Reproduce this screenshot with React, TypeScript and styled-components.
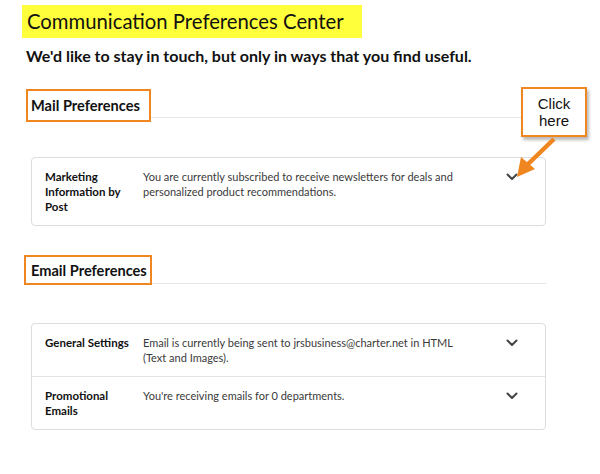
import React from 'react'
import styled, { createGlobalStyle } from 'styled-components'

const GlobalStyle = createGlobalStyle`
	html, body {
		margin: 0;
		padding: 0;
		background: #ffffff;
	}
	body {
		font-family: Lato, 'Liberation Sans', Arial, sans-serif;
		color: #111111;
	}
`

const Page = styled.div`
	position: relative;
	width: 600px;
	height: 474px;
	padding: 5px 0 0 22px;
	box-sizing: border-box;
	overflow: hidden;
`

const Title = styled.h1`
	display: inline-block;
	margin: 0;
	padding: 3px 18px 3px 5px;
	background: #ffff3c;
	font-size: 20.3px;
	line-height: 27px;
	font-weight: 400;
	color: #111111;
`

const Subtitle = styled.p`
	margin: 8px 0 0 4px;
	font-size: 16px;
	line-height: 20px;
	font-weight: 700;
	color: #111111;
`

const Section = styled.section<{ $top: number }>`
	margin-top: ${(p) => p.$top}px;
	width: 524px;
`

const SectionHeader = styled.div<{ $offset: number }>`
	display: flex;
	align-items: flex-end;
	padding-left: ${(p) => p.$offset}px;
`

const HeadingBox = styled.h2<{ $height: number; $padL: number; $padR: number }>`
	margin: 0;
	box-sizing: border-box;
	height: ${(p) => p.$height}px;
	padding: 0 ${(p) => p.$padR}px 0 ${(p) => p.$padL}px;
	display: flex;
	align-items: center;
	border: 2px solid #f0861f;
	font-size: 14.6px;
	font-weight: 700;
	color: #111111;
	white-space: nowrap;
`

const Rule = styled.div<{ $lift: number }>`
	flex: 1;
	height: 1px;
	background: #e7e7e7;
	margin-bottom: ${(p) => p.$lift}px;
`

const Card = styled.div<{ $top: number }>`
	margin: ${(p) => p.$top}px 0 0 9px;
	border: 1px solid #dddddd;
	border-radius: 4px;
	background: #ffffff;
`

const Row = styled.div<{ $divided?: boolean }>`
	display: flex;
	align-items: flex-start;
	padding: 11px 0 11px 13px;
	border-top: ${(p) => (p.$divided ? '1px solid #e3e3e3' : 'none')};
`

const Label = styled.div`
	width: 86px;
	flex-shrink: 0;
	margin-right: 12px;
	font-size: 11.5px;
	line-height: 15px;
	font-weight: 700;
	color: #111111;
`

const Description = styled.div`
	width: 322px;
	flex-shrink: 0;
	font-size: 11px;
	line-height: 15px;
	color: #3a3a3a;
`

const Toggle = styled.div`
	margin-left: auto;
	width: 67px;
	height: 15px;
	display: flex;
	align-items: center;
	justify-content: center;
`

const Callout = styled.div`
	position: absolute;
	left: 521px;
	top: 87px;
	width: 66px;
	height: 50px;
	box-sizing: border-box;
	border: 2px solid #f0861f;
	background: #ffffff;
	box-shadow: 2px 3px 3px rgba(0, 0, 0, 0.28);
	display: flex;
	align-items: center;
	justify-content: center;
	text-align: center;
	font-family: 'Liberation Sans', Arial, sans-serif;
	font-size: 15px;
	line-height: 17px;
	color: #111111;
`

const Arrow = styled.svg`
	position: absolute;
	left: 510px;
	top: 136px;
`

const Chevron = () => (
	<svg width="12" height="8" viewBox="0 0 12 8">
		<polyline points="1.5,1.5 6,6 10.5,1.5" fill="none" stroke="#444444" strokeWidth="2" strokeLinecap="round" strokeLinejoin="round" />
	</svg>
)

const prefRow = (label: string, text: string, divided = false) => (
	<Row $divided={divided}>
		<Label>{label}</Label>
		<Description>{text}</Description>
		<Toggle>
			<Chevron />
		</Toggle>
	</Row>
)

export default function App() {
	return (
		<>
			<GlobalStyle />
			<Page>
				<Title>Communication Preferences Center</Title>
				<Subtitle>We'd like to stay in touch, but only in ways that you find useful.</Subtitle>

				<Section $top={23}>
					<SectionHeader $offset={4}>
						<HeadingBox $height={33} $padL={3} $padR={9}>Mail Preferences</HeadingBox>
						<Rule $lift={4} />
					</SectionHeader>
					<Card $top={35}>
						{prefRow(
							'Marketing Information by Post',
							'You are currently subscribed to receive newsletters for deals and personalized product recommendations.'
						)}
					</Card>
				</Section>

				<Section $top={29}>
					<SectionHeader $offset={2}>
						<HeadingBox $height={30} $padL={5} $padR={3}>Email Preferences</HeadingBox>
						<Rule $lift={1} />
					</SectionHeader>
					<Card $top={38}>
						{prefRow(
							'General Settings',
							'Email is currently being sent to jrsbusiness@charter.net in HTML (Text and Images).'
						)}
						{prefRow('Promotional Emails', "You're receiving emails for 0 departments.", true)}
					</Card>
				</Section>

				<Callout>
					Click
					<br />
					here
				</Callout>
				<Arrow width="50" height="46" viewBox="0 0 50 46">
					<line x1="44" y1="3" x2="16" y2="30" stroke="#f0861f" strokeWidth="4.5" strokeLinecap="butt" />
					<polygon points="7,41 11,21 25,33" fill="#f0861f" />
				</Arrow>
			</Page>
		</>
	)
}
